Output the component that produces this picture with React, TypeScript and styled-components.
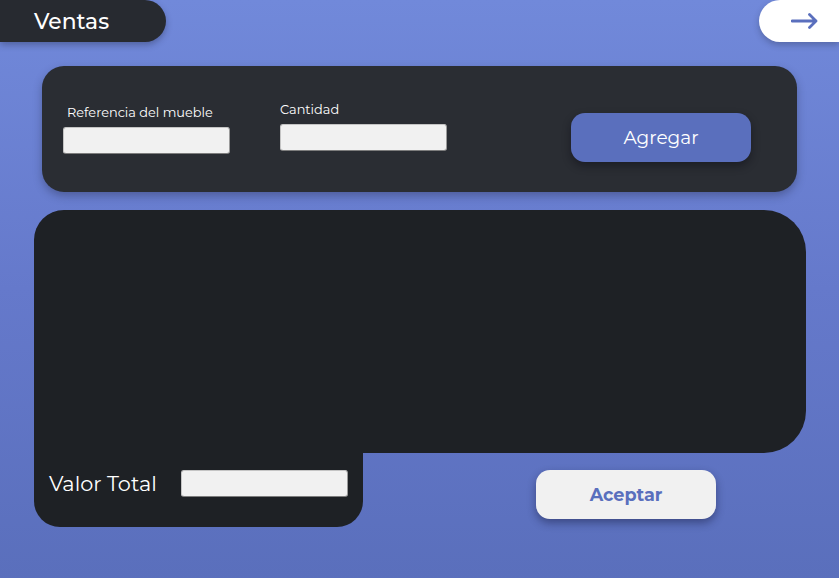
import React from "react";
import styled, { createGlobalStyle } from "styled-components";

const Global = createGlobalStyle`
  html, body { margin: 0; padding: 0; }
  body { font-family: "Montserrat", "Open Sans", "Noto Sans", sans-serif; }
  * { box-sizing: border-box; }
`;

const Page = styled.div`
  width: 839px;
  height: 578px;
  overflow: hidden;
  background: linear-gradient(180deg, #7189da 0%, #6579cb 50%, #5a6fbc 100%);
  display: flex;
  flex-direction: column;
`;

const TopBar = styled.div`
  display: flex;
  justify-content: space-between;
  align-items: flex-start;
  height: 42px;
`;

const TitleTab = styled.div`
  width: 166px;
  height: 42px;
  background: #272a30;
  border-radius: 0 21px 21px 0;
  box-shadow: 0 3px 6px rgba(30, 35, 60, 0.35);
  display: flex;
  align-items: center;
  padding-left: 34px;
  color: #ffffff;
  font-size: 21.8px;
  font-weight: 500;
`;

const NextButton = styled.button`
  width: 80px;
  height: 42px;
  border: none;
  background: #ffffff;
  border-radius: 21px 0 0 21px;
  box-shadow: 0 3px 6px rgba(30, 35, 60, 0.3);
  display: flex;
  align-items: center;
  padding: 0 0 0 32px;
  cursor: pointer;
`;

const Content = styled.div`
  display: flex;
  flex-direction: column;
  padding: 24px 0 0 34px;
`;

const FormCard = styled.div`
  margin-left: 8px;
  width: 755px;
  height: 126px;
  background: #2a2d33;
  border-radius: 22px;
  box-shadow: 0 4px 8px rgba(30, 35, 60, 0.35);
  display: flex;
  align-items: center;
  padding: 0 46px 0 21px;
`;

const Field = styled.div<{ $shift: number; $lift: number }>`
  display: flex;
  flex-direction: column;
  gap: 7px;
  margin-left: ${(p) => p.$shift}px;
  margin-top: ${(p) => p.$lift}px;
`;

const Label = styled.label<{ $indent: number }>`
  color: #ffffff;
  font-size: 12.9px;
  padding-left: ${(p) => p.$indent}px;
  line-height: 15px;
`;

const Input = styled.div`
  width: 167px;
  height: 27px;
  background: #f1f1f1;
  border: 1px solid #c4c4c4;
  border-bottom-color: #7d7d7d;
  border-right-color: #9a9a9a;
  border-radius: 3px;
`;

const AddButton = styled.button`
  margin-left: auto;
  margin-top: 16px;
  width: 180px;
  height: 49px;
  border: none;
  border-radius: 14px;
  background: #5a6fbd;
  color: #ffffff;
  font-family: inherit;
  font-size: 18.5px;
  font-weight: 400;
  box-shadow: 0 4px 8px rgba(10, 12, 20, 0.45);
  cursor: pointer;
`;

const ListPanel = styled.div`
  margin-top: 18px;
  width: 772px;
  height: 243px;
  background: #1e2125;
  border-radius: 30px 42px 42px 0;
`;

const BottomRow = styled.div`
  display: flex;
  align-items: flex-start;
`;

const TotalBox = styled.div`
  width: 329px;
  height: 74px;
  background: #1e2125;
  border-radius: 0 0 26px 26px;
  display: flex;
  align-items: center;
  padding: 0 0 14px 15px;
  gap: 24px;
`;

const TotalLabel = styled.span`
  color: #ffffff;
  font-size: 20.8px;
  font-weight: 400;
  white-space: nowrap;
`;

const AcceptButton = styled.button`
  margin: 17px 0 0 173px;
  width: 180px;
  height: 49px;
  border: none;
  border-radius: 14px;
  background: #f1f1f1;
  color: #5a6fbd;
  font-family: inherit;
  font-size: 17.6px;
  font-weight: 700;
  box-shadow: 0 4px 8px rgba(20, 25, 60, 0.45);
  cursor: pointer;
`;

export default function App() {
  return (
    <>
      <Global />
      <Page>
        <TopBar>
          <TitleTab>Ventas</TitleTab>
          <NextButton aria-label="Siguiente">
            <svg width="28" height="16" viewBox="0 0 28 16" fill="none">
              <path
                d="M1 8 H25 M18.5 1.5 L25 8 L18.5 14.5"
                stroke="#5a6fbd"
                strokeWidth="2.8"
                strokeLinecap="round"
                strokeLinejoin="round"
              />
            </svg>
          </NextButton>
        </TopBar>
        <Content>
          <FormCard>
            <Field $shift={0} $lift={1}>
              <Label $indent={4}>Referencia del mueble</Label>
              <Input />
            </Field>
            <Field $shift={50} $lift={-5}>
              <Label $indent={0}>Cantidad</Label>
              <Input />
            </Field>
            <AddButton>Agregar</AddButton>
          </FormCard>
          <ListPanel />
          <BottomRow>
            <TotalBox>
              <TotalLabel>Valor Total</TotalLabel>
              <Input />
            </TotalBox>
            <AcceptButton>Aceptar</AcceptButton>
          </BottomRow>
        </Content>
      </Page>
    </>
  );
}
